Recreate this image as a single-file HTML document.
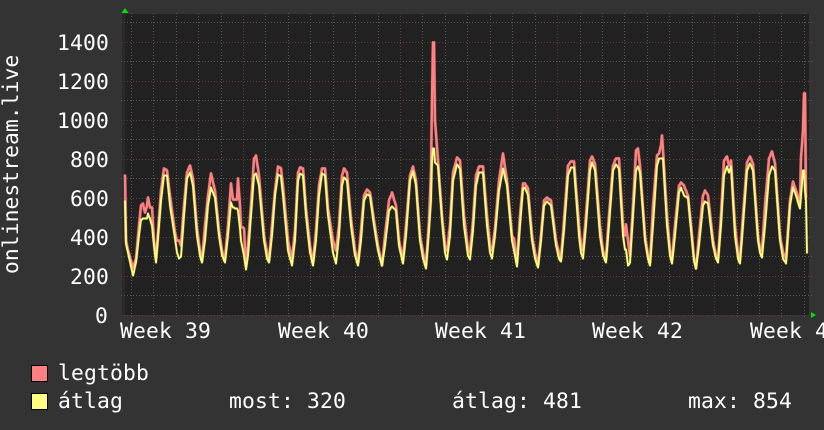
<!DOCTYPE html>
<html>
<head>
<meta charset="utf-8">
<style>
html,body{margin:0;padding:0;background:#333;width:824px;height:430px;overflow:hidden}
svg{display:block}
text{font-family:"DejaVu Sans Mono","Liberation Mono",monospace;font-size:21.33px;letter-spacing:.16px;fill:#fff}
</style>
</head>
<body>
<svg id="g" xmlns="http://www.w3.org/2000/svg" width="824" height="430" viewBox="0 0 824 430">
<rect width="824" height="430" fill="#333"/>
<rect x="124" y="14" width="685" height="301" fill="#212121"/>
<rect x="122" y="14" width="3" height="301" fill="#2a2a2a"/>
<g id="grid" shape-rendering="crispEdges" fill="none" stroke-width="1">
<path stroke="#565656" stroke-dasharray="1 2" d="M121 22.5H812M121 61.5H812M121 100.5H812M121 139.5H812M121 178.5H812M121 217.5H812M121 256.5H812M121 295.5H812"/>
<path stroke="#633a3a" stroke-dasharray="1 2" d="M121 42.5H812M121 81.5H812M121 120.5H812M121 159.5H812M121 198.5H812M121 237.5H812M121 276.5H812M121 315.5H812"/>
<path id="vmin" stroke="#565656" stroke-dasharray="1 2" d=""/>
<path id="vmaj" stroke="#633a3a" stroke-dasharray="1 2" d=""/>
</g>
<path id="r2" fill="none" stroke="#ff8080" stroke-opacity=".3" stroke-width="3.4" stroke-linejoin="round" d=""/>
<path id="r" fill="none" stroke="#ff8080" stroke-width="2.4" stroke-linejoin="round" d=""/>
<path id="y2" fill="none" stroke="#ffff80" stroke-opacity=".25" stroke-width="2.9" stroke-linejoin="round" d=""/>
<path id="y" fill="none" stroke="#ffff80" stroke-width="1.8" stroke-linejoin="round" d=""/>
<path fill="#00e000" d="M125 8l3.5 5h-7zM811 312l5 3-5 3z"/>
<text x="57" y="50">1400</text>
<text x="57" y="89">1200</text>
<text x="57" y="128">1000</text>
<text x="70" y="167">800</text>
<text x="70" y="206">600</text>
<text x="70" y="245">400</text>
<text x="70" y="284">200</text>
<text x="95" y="323">0</text>
<text x="120" y="338">Week 39</text>
<text x="278" y="338">Week 40</text>
<text x="435" y="338">Week 41</text>
<text x="592" y="338">Week 42</text>
<text x="750" y="338">Week 43</text>
<text transform="translate(18,274) rotate(-90)" style="letter-spacing:.06px">onlinestream.live</text>
<rect x="31.5" y="365.5" width="16" height="16" fill="#ff8080" stroke="#000"/>
<rect x="31.5" y="393.5" width="16" height="16" fill="#ffff80" stroke="#000"/>
<text x="58" y="380">legtöbb</text>
<text x="58" y="408">átlag</text>
<text x="229" y="408">most: 320</text>
<text x="452" y="408">átlag: 481</text>
<text x="688" y="408">max: 854</text>
</svg>
<script>
var K=[[125,200,174],[126,243,240],[128,252,250],[133,275,267],[136,262,258],[139,235,225],[141,219,205],[143,218,203],[145,218,212],[147,218,205],[148,213,197],[150,218,207],[152,225,207],[154,245,240],[156,262,258],[158,238,232],[161,200,190],[164,175,168],[167,175,170],[170,205,195],[175,238,232],[177,252,240],[179,258,240],[181,256,245],[184,215,205],[187,178,172],[190,172,165],[193,185,178],[197,235,228],[200,255,250],[202,262,260],[205,240,225],[208,205,195],[211,187,173],[215,197,190],[219,235,230],[222,255,250],[225,262,258],[228,235,225],[231,202,183],[233,207,199],[237,208,199],[238,210,178],[240,228,205],[241,240,226],[244,255,228],[246,269,265],[248,255,245],[251,215,205],[254,175,158],[256,173,155],[259,185,175],[264,240,235],[267,258,252],[269,262,260],[272,235,225],[275,195,190],[278,174,166],[281,176,168],[283,195,185],[288,250,240],[292,265,258],[295,240,230],[298,180,172],[300,173,167],[303,175,168],[306,215,208],[310,252,245],[313,265,262],[316,240,230],[319,195,185],[322,173,168],[325,175,168],[328,215,208],[333,252,240],[336,263,250],[339,235,225],[342,185,175],[344,177,168],[347,180,172],[351,225,218],[355,255,250],[358,265,262],[361,240,230],[364,200,195],[367,194,189],[370,195,192],[374,225,220],[378,250,245],[382,265,265],[385,245,235],[389,210,200],[392,206,192],[396,210,205],[399,245,240],[403,263,258],[406,235,225],[410,180,175],[413,171,166],[416,185,180],[420,240,235],[423,258,252],[426,268,265],[429,230,220],[431,200,170],[432,160,100],[433,148,42],[434,148,42],[435,162,120],[438,165,160],[442,220,215],[445,252,245],[447,259,250],[450,235,225],[453,180,172],[457,164,157],[460,168,160],[464,225,215],[468,255,248],[470,259,252],[473,230,220],[476,185,175],[479,172,166],[483,172,166],[487,225,215],[490,252,245],[492,258,250],[495,235,228],[499,190,180],[503,168,153],[507,185,180],[512,240,235],[514,250,238],[517,266,262],[520,225,215],[523,188,183],[525,187,183],[528,195,188],[532,240,235],[535,258,252],[538,267,265],[541,240,235],[544,205,200],[547,201,197],[551,205,200],[556,245,240],[559,258,252],[561,261,258],[564,230,220],[568,175,165],[571,167,161],[574,167,161],[579,235,225],[581,252,245],[583,258,250],[586,225,215],[590,170,160],[592,162,156],[595,170,163],[600,235,225],[603,255,250],[606,262,258],[609,225,215],[613,170,165],[616,164,158],[619,168,158],[623,235,225],[625,249,235],[626,249,224],[628,265,240],[630,262,255],[633,215,205],[636,170,150],[638,166,148],[640,172,165],[645,240,235],[648,258,255],[650,265,262],[653,225,205],[657,165,155],[659,158,153],[661,158,145],[662,158,135],[663,158,150],[667,225,215],[670,255,250],[672,263,258],[675,235,225],[679,192,185],[681,187,182],[684,195,185],[688,197,195],[692,240,235],[694,260,258],[696,268,268],[699,245,235],[703,205,195],[705,201,190],[708,203,195],[713,245,240],[716,258,255],[718,262,258],[721,225,215],[724,175,160],[727,166,156],[729,172,165],[731,166,160],[735,235,225],[738,258,252],[740,263,258],[743,225,215],[747,170,162],[750,163,156],[753,170,163],[758,240,235],[760,252,248],[762,257,250],[765,225,205],[769,175,158],[772,166,151],[775,170,163],[780,240,235],[783,258,252],[786,263,258],[790,205,200],[793,187,181],[796,195,190],[800,208,202],[801,195,157],[803,170,130],[804,170,93],[805,190,93],[806,200,197],[807,253,197]];
function val(x,i){for(var k=0;k<K.length-1;k++){var a=K[k],b=K[k+1];if(x>=a[0]&&x<=b[0]){var t=(x-a[0])/(b[0]-a[0]);return a[i]+(b[i]-a[i])*t}}return K[K.length-1][i]}
function build(i){var d='';for(var x=125;x<=807;x++){var v=Math.round(val(x,i))+.5;d+=(x==125?'M':'L')+x+' '+v}return d}
document.getElementById('r').setAttribute('d',build(2));
document.getElementById('r2').setAttribute('d',build(2));
document.getElementById('y').setAttribute('d',build(1));
document.getElementById('y2').setAttribute('d',build(1));
var mn='',mj='';
for(var n=0;n<31;n++){var x=131.4+22.43*n,p=Math.floor(x)+.5;if((n-5)%7==0){mj+='M'+p+' 13V318'}else{mn+='M'+p+' 13V317'}}
document.getElementById('vmin').setAttribute('d',mn);
document.getElementById('vmaj').setAttribute('d',mj);
</script>
</body>
</html>
